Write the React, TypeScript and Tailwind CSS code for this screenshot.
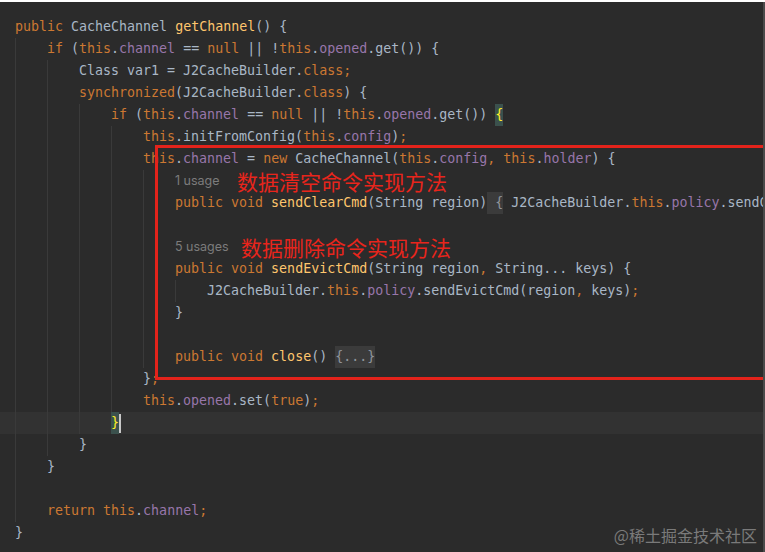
import React from "react";

type Tok = [string, string?];

const K = "text-[#cc7832]";
const F = "text-[#9876aa]";
const M = "text-[#ffc66d]";
const MATCH = "bg-[#3b514d] text-[#ffef28]";
const FOLD = "bg-[#3b3b3b] text-[#8f959b]";

type Line = {
  n: number;
  toks?: Tok[];
  usage?: [string, number, string];
  current?: boolean;
  cursor?: boolean;
};

const lines: Line[] = [
  { n: 0, toks: [["public", K], [" CacheChannel "], ["getChannel", M], ["() {"]] },
  { n: 1, toks: [["if", K], [" ("], ["this", K], ["."], ["channel", F], [" == "], ["null", K], [" || !"], ["this", K], ["."], ["opened", F], [".get()) {"]] },
  { n: 2, toks: [["Class var1 = J2CacheBuilder."], ["class", K], [";", K]] },
  { n: 2, toks: [["synchronized", K], ["(J2CacheBuilder."], ["class", K], [") {"]] },
  { n: 3, toks: [["if", K], [" ("], ["this", K], ["."], ["channel", F], [" == "], ["null", K], [" || !"], ["this", K], ["."], ["opened", F], [".get()) "], ["{", MATCH]] },
  { n: 4, toks: [["this", K], [".initFromConfig("], ["this", K], ["."], ["config", F], [")"], [";", K]] },
  { n: 4, toks: [["this", K], ["."], ["channel", F], [" = "], ["new", K], [" CacheChannel("], ["this", K], ["."], ["config", F], [",", K], [" "], ["this", K], ["."], ["holder", F], [") {"]] },
  { n: 5, usage: ["1 usage", 62, "数据清空命令实现方法"] },
  { n: 5, toks: [["public", K], [" "], ["void", K], [" "], ["sendClearCmd", M], ["(String region)"], [" {", FOLD], [" J2CacheBuilder."], ["this", K], ["."], ["policy", F], [".sendClearCmd(region)"], [";", K], [" }"]] },
  { n: 5 },
  { n: 5, usage: ["5 usages", 66, "数据删除命令实现方法"] },
  { n: 5, toks: [["public", K], [" "], ["void", K], [" "], ["sendEvictCmd", M], ["(String region"], [",", K], [" String... keys) {"]] },
  { n: 6, toks: [["J2CacheBuilder."], ["this", K], ["."], ["policy", F], [".sendEvictCmd(region"], [",", K], [" keys)"], [";", K]] },
  { n: 5, toks: [["}"]] },
  { n: 5 },
  { n: 5, toks: [["public", K], [" "], ["void", K], [" "], ["close", M], ["() "], ["{...}", FOLD]] },
  { n: 4, toks: [["}"], [";", K]] },
  { n: 4, toks: [["this", K], ["."], ["opened", F], [".set("], ["true", K], [")"], [";", K]] },
  { n: 3, toks: [["}", MATCH]], current: true, cursor: true },
  { n: 2, toks: [["}"]] },
  { n: 1, toks: [["}"]] },
  { n: 1 },
  { n: 1, toks: [["return", K], [" "], ["this", K], ["."], ["channel", F], [";", K]] },
  { n: 0, toks: [["}"]] },
];

function CodeLine({ line }: { line: Line }) {
  const guides = Array.from({ length: line.n });
  return (
    <div
      className={
        "flex items-center h-[22px] leading-[22px] pl-[15px] whitespace-pre " +
        (line.current ? "bg-[#323232]" : "")
      }
    >
      {guides.map((_, i) => (
        <span key={i} className="w-[32px] h-full shrink-0 border-l border-[#3a3a3a]" />
      ))}
      {line.toks &&
        line.toks.map((t, i) => (
          <span key={i} className={t[1] ?? ""}>
            {t[0]}
          </span>
        ))}
      {line.cursor && <span className="inline-block w-[2px] h-[19px] bg-[#c8c8c8]" />}
      {line.usage && (
        <>
          <span
            className="shrink-0 text-[12.5px] text-[#7c7c7c] font-['Inter',sans-serif]"
            style={{ width: line.usage[1] }}
          >
            {line.usage[0]}
          </span>
          <span className="text-[21px] text-[#e8251c] font-['Noto_Sans_CJK_SC',sans-serif] leading-[22px]">
            {line.usage[2]}
          </span>
        </>
      )}
    </div>
  );
}

export default function App() {
  return (
    <div className="w-[765px] h-[552px] bg-white overflow-hidden flex">
      <div className="mt-[2px] w-[763px] h-[550px] bg-[#2b2b2b] relative overflow-hidden pt-[14px] font-['DejaVu_Sans_Mono',monospace] text-[13.3px] text-[#a9b7c6]">
        {lines.map((l, i) => (
          <CodeLine key={i} line={l} />
        ))}
        <div className="absolute left-[155px] top-[143px] w-[640px] h-[235px] border-[3px] border-[#e3231b] pointer-events-none" />
        <div className="absolute right-[6px] bottom-[5px] text-[16px] text-[#7a7a7a] font-['Noto_Sans_CJK_SC',sans-serif]">
          @稀土掘金技术社区
        </div>
      </div>
      <div className="mt-[2px] w-[2px] h-[550px] bg-[#4a4a4a]" />
    </div>
  );
}
